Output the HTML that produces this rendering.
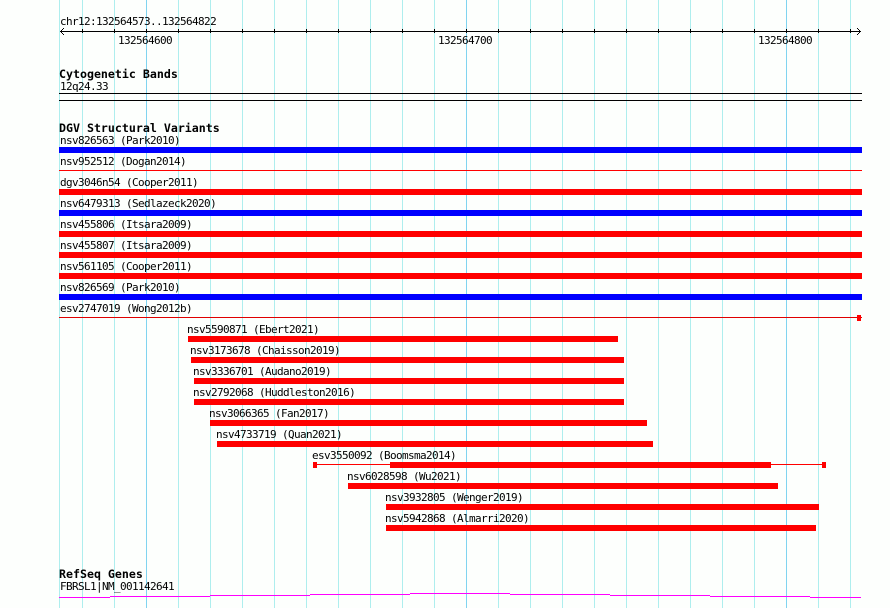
<!DOCTYPE html>
<html>
<head>
<meta charset="utf-8">
<style>
html,body{margin:0;padding:0;background:#fdfffd;}
body{width:890px;height:608px;overflow:hidden;}
svg{display:block;}
text{font-family:"DejaVu Sans Mono","Liberation Mono",monospace;font-size:11px;letter-spacing:-0.62px;fill:#000;white-space:pre;}
text.h{font-size:11.62px;letter-spacing:0;font-weight:bold;}
</style>
</head>
<body>
<svg width="890" height="608" viewBox="0 0 890 608" xmlns="http://www.w3.org/2000/svg" shape-rendering="crispEdges">
<g fill="#aeeeee">
<rect x="59" y="0" width="1" height="608"/><rect x="82" y="0" width="1" height="608"/><rect x="114" y="0" width="1" height="608"/>
<rect x="178" y="0" width="1" height="608"/><rect x="210" y="0" width="1" height="608"/><rect x="242" y="0" width="1" height="608"/>
<rect x="274" y="0" width="1" height="608"/><rect x="306" y="0" width="1" height="608"/><rect x="338" y="0" width="1" height="608"/>
<rect x="370" y="0" width="1" height="608"/><rect x="402" y="0" width="1" height="608"/><rect x="434" y="0" width="1" height="608"/>
<rect x="498" y="0" width="1" height="608"/><rect x="530" y="0" width="1" height="608"/><rect x="562" y="0" width="1" height="608"/>
<rect x="594" y="0" width="1" height="608"/><rect x="626" y="0" width="1" height="608"/><rect x="658" y="0" width="1" height="608"/>
<rect x="690" y="0" width="1" height="608"/><rect x="722" y="0" width="1" height="608"/><rect x="754" y="0" width="1" height="608"/>
<rect x="818" y="0" width="1" height="608"/><rect x="850" y="0" width="1" height="608"/>
</g>
<g fill="#80d4f0">
<rect x="146" y="0" width="1" height="608"/><rect x="466" y="0" width="1" height="608"/><rect x="786" y="0" width="1" height="608"/>
</g>

<!-- ruler -->
<g fill="#000">
<rect x="60" y="31" width="801" height="1"/>
<rect x="82" y="29" width="1" height="4"/><rect x="114" y="29" width="1" height="4"/><rect x="146" y="29" width="1" height="4"/>
<rect x="178" y="29" width="1" height="4"/><rect x="210" y="29" width="1" height="4"/><rect x="242" y="29" width="1" height="4"/>
<rect x="274" y="29" width="1" height="4"/><rect x="306" y="29" width="1" height="4"/><rect x="338" y="29" width="1" height="4"/>
<rect x="370" y="29" width="1" height="4"/><rect x="402" y="29" width="1" height="4"/><rect x="434" y="29" width="1" height="4"/>
<rect x="466" y="29" width="1" height="4"/><rect x="498" y="29" width="1" height="4"/><rect x="530" y="29" width="1" height="4"/>
<rect x="562" y="29" width="1" height="4"/><rect x="594" y="29" width="1" height="4"/><rect x="626" y="29" width="1" height="4"/>
<rect x="658" y="29" width="1" height="4"/><rect x="690" y="29" width="1" height="4"/><rect x="722" y="29" width="1" height="4"/>
<rect x="754" y="29" width="1" height="4"/><rect x="786" y="29" width="1" height="4"/><rect x="818" y="29" width="1" height="4"/>
<rect x="850" y="29" width="1" height="4"/>
<!-- open left arrow -->
<rect x="61" y="30" width="1" height="1"/><rect x="61" y="32" width="1" height="1"/>
<rect x="62" y="29" width="1" height="1"/><rect x="62" y="33" width="1" height="1"/>
<rect x="63" y="28" width="1" height="1"/><rect x="63" y="34" width="1" height="1"/>
<!-- open right arrow -->
<rect x="859" y="30" width="1" height="1"/><rect x="859" y="32" width="1" height="1"/>
<rect x="858" y="29" width="1" height="1"/><rect x="858" y="33" width="1" height="1"/>
<rect x="857" y="28" width="1" height="1"/><rect x="857" y="34" width="1" height="1"/>
<rect x="59" y="93" width="803" height="1"/>
<rect x="59" y="100" width="803" height="1"/>
</g>

<text x="60" y="25">chr12:132564573..132564822</text>
<text x="118" y="44">132564600</text>
<text x="438" y="44">132564700</text>
<text x="758" y="44">132564800</text>

<text class="h" x="59" y="78">Cytogenetic Bands</text>
<text x="60" y="90">12q24.33</text>
<text class="h" x="59" y="132">DGV Structural Variants</text>

<!-- top variants -->
<text x="60" y="144">nsv826563 (Park2010)</text>
<rect x="59" y="147" width="803" height="6" fill="#0000ff"/>
<text x="60" y="165">nsv952512 (Dogan2014)</text>
<rect x="59" y="170" width="803" height="1" fill="#ff0000"/>
<text x="60" y="186">dgv3046n54 (Cooper2011)</text>
<rect x="59" y="189" width="803" height="6" fill="#ff0000"/>
<text x="60" y="207">nsv6479313 (Sedlazeck2020)</text>
<rect x="59" y="210" width="803" height="6" fill="#0000ff"/>
<text x="60" y="228">nsv455806 (Itsara2009)</text>
<rect x="59" y="231" width="803" height="6" fill="#ff0000"/>
<text x="60" y="249">nsv455807 (Itsara2009)</text>
<rect x="59" y="252" width="803" height="6" fill="#ff0000"/>
<text x="60" y="270">nsv561105 (Cooper2011)</text>
<rect x="59" y="273" width="803" height="6" fill="#ff0000"/>
<text x="60" y="291">nsv826569 (Park2010)</text>
<rect x="59" y="294" width="803" height="6" fill="#0000ff"/>
<text x="60" y="312">esv2747019 (Wong2012b)</text>
<rect x="59" y="317" width="803" height="1" fill="#e00000"/>
<rect x="857" y="315" width="4" height="6" fill="#ff0000"/>

<!-- lower variants -->
<text x="187" y="333">nsv5590871 (Ebert2021)</text>
<rect x="188" y="336" width="430" height="6" fill="#ff0000"/>
<text x="190" y="354">nsv3173678 (Chaisson2019)</text>
<rect x="191" y="357" width="433" height="6" fill="#ff0000"/>
<text x="193" y="375">nsv3336701 (Audano2019)</text>
<rect x="194" y="378" width="430" height="6" fill="#ff0000"/>
<text x="193" y="396">nsv2792068 (Huddleston2016)</text>
<rect x="194" y="399" width="430" height="6" fill="#ff0000"/>
<text x="209" y="417">nsv3066365 (Fan2017)</text>
<rect x="210" y="420" width="437" height="6" fill="#ff0000"/>
<text x="216" y="438">nsv4733719 (Quan2021)</text>
<rect x="217" y="441" width="436" height="6" fill="#ff0000"/>
<text x="312" y="459">esv3550092 (Boomsma2014)</text>
<rect x="313" y="462" width="4" height="6" fill="#ff0000"/>
<rect x="317" y="464" width="73" height="1" fill="#ff0000"/>
<rect x="390" y="462" width="381" height="6" fill="#ff0000"/>
<rect x="771" y="464" width="51" height="1" fill="#ff0000"/>
<rect x="822" y="462" width="4" height="6" fill="#ff0000"/>
<text x="347" y="480">nsv6028598 (Wu2021)</text>
<rect x="348" y="483" width="430" height="6" fill="#ff0000"/>
<text x="385" y="501">nsv3932805 (Wenger2019)</text>
<rect x="386" y="504" width="433" height="6" fill="#ff0000"/>
<text x="385" y="522">nsv5942868 (Almarri2020)</text>
<rect x="386" y="525" width="430" height="6" fill="#ff0000"/>

<!-- genes -->
<text class="h" x="59" y="578">RefSeq Genes</text>
<text x="60" y="590">FBRSL1|NM_001142641</text>
<g fill="#ff00ff">
<rect x="59" y="597" width="51" height="1"/>
<rect x="110" y="596" width="100" height="1"/>
<rect x="210" y="595" width="100" height="1"/>
<rect x="310" y="594" width="100" height="1"/>
<rect x="410" y="593" width="100" height="1"/>
<rect x="510" y="594" width="100" height="1"/>
<rect x="610" y="595" width="100" height="1"/>
<rect x="710" y="596" width="100" height="1"/>
<rect x="810" y="597" width="51" height="1"/>
</g>
</svg>
</body>
</html>
